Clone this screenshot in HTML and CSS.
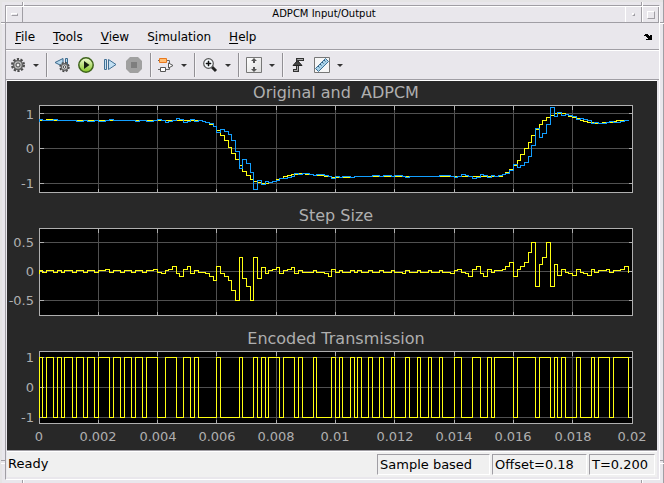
FILE: index.html
```html
<!DOCTYPE html>
<html lang="en">
<head>
<meta charset="utf-8">
<title>ADPCM Input/Output</title>
<link rel="stylesheet" href="styles.css">
</head>
<body>
<div class="frame">
  <i class="notch top left"></i><i class="notch top right"></i>
  <i class="notch bottom left"></i><i class="notch bottom right"></i>
  <i class="notch-side start"></i><i class="notch-side end"></i>
  <div class="window">
    <header class="titlebar">
      <button class="wm wm-menu" aria-label="Window menu"><i class="dash"></i></button>
      <h1>ADPCM Input/Output</h1>
      <button class="wm wm-min" aria-label="Minimize"><i class="dot"></i></button>
      <button class="wm wm-max" aria-label="Maximize"><i class="square"></i></button>
    </header>
    <nav class="menubar">
      <button><u>F</u>ile</button>
      <button><u>T</u>ools</button>
      <button><u>V</u>iew</button>
      <button>S<u>i</u>mulation</button>
      <button><u>H</u>elp</button>
      <button class="dock" aria-label="Dock window"><svg width="8" height="7" viewBox="0 0 8 7"><path d="M0 1h1V0h3v1h1v1h1V1h2v5H2V5h2V4H3V3H2V2H0z"/></svg></button>
    </nav>
    <div class="toolbar">
      <button class="tool" aria-label="Configuration"><svg width="16" height="16" viewBox="0 0 16 16"><circle cx="8" cy="8" r="5.8" fill="none" stroke="#4b4b4b" stroke-width="2.4" stroke-dasharray="2.2 1.44"/><circle cx="8" cy="8" r="4.5" fill="#bcbcbc" stroke="#626262" stroke-width="1.6"/><circle cx="8" cy="8" r="2" fill="#eee" stroke="#4a4a4a"/></svg></button>
      <button class="caret" aria-label="Configuration options"></button>
      <i class="sep"></i>
      <button class="tool" aria-label="Step back options"><svg width="16" height="16" viewBox="0 0 16 16"><path d="M9 1.500v8L1 5.500z" fill="#b6d7ec" stroke="#3b698d"/><path d="M11.500 1.500h2v8h-2z" fill="#b6d7ec" stroke="#3b698d"/><circle cx="10.500" cy="10" r="4.200" fill="none" stroke="#444" stroke-width="2" stroke-dasharray="1.900 1.400"/><circle cx="10.500" cy="10" r="3.200" fill="#ddd" stroke="#666" stroke-width="1.400"/><circle cx="10.500" cy="10" r="1.300" fill="#fff" stroke="#444"/></svg></button>
      <button class="tool" aria-label="Run"><svg width="16" height="16" viewBox="0 0 16 16"><defs><linearGradient id="run" x2="0" y2="1"><stop stop-color="#f2fbd8"/><stop offset="1" stop-color="#83c524"/></linearGradient></defs><circle cx="8" cy="8" r="7.200" fill="url(#run)" stroke="#3f641c" stroke-width="1.500"/><path d="M6 4v8l5.500-4z" fill="#151d10"/></svg></button>
      <button class="tool" aria-label="Step forward"><svg width="16" height="16" viewBox="0 0 16 16"><path d="M2.500 2.500h2v10h-2zM6.500 2.500v10L14 7.500z" fill="#c2dff2" stroke="#416f94"/></svg></button>
      <button class="tool" aria-label="Stop"><svg width="16" height="16" viewBox="0 0 16 16"><path d="M4 0h8l4 4v8l-4 4H4l-4-4V4z" fill="#a0a0a0"/><path d="M5 5h6v6H5z" fill="#7e7e7e"/></svg></button>
      <i class="sep"></i>
      <button class="tool" aria-label="Highlight block"><svg width="16" height="16" viewBox="0 0 16 16"><path d="M8 3.500h3.500v3M11.500 10v2.500H8M0 3.500h2M0 12.500h2" fill="none" stroke="#666"/><path d="M1.500 1.500h7v4h-7z" fill="#ffbd72" stroke="#e9781d"/><path d="M10.500 6l4.500 2.500-4.500 2.500z" fill="#fff" stroke="#555"/><path d="M2.500 10.500h5v4h-5z" fill="#fff" stroke="#555"/></svg></button>
      <button class="caret" aria-label="Highlight options"></button>
      <i class="sep"></i>
      <button class="tool" aria-label="Zoom in"><svg width="16" height="16" viewBox="0 0 16 16"><path d="M10 10l4 4" stroke="#222" stroke-width="3"/><circle cx="6.500" cy="6.500" r="4.800" fill="#f4f8fb" stroke="#555" stroke-width="1.200"/><path d="M6 4h1v2h2v1H7v2H6V7H4V6h2z" fill="#111" stroke="#111" stroke-width=".5"/></svg></button>
      <button class="caret" aria-label="Zoom options"></button>
      <i class="sep"></i>
      <button class="tool" aria-label="Scale axes"><svg width="16" height="16" viewBox="0 0 16 16"><defs><linearGradient id="page" x2="1" y2="1"><stop stop-color="#fff"/><stop offset="1" stop-color="#ddd"/></linearGradient></defs><path d="M.5.5h15v15H.5z" fill="url(#page)" stroke="#777"/><path d="M8 1l3 3H9v2H7V4H5zM8 15l3-3H9v-2H7v2H5z" fill="#555"/></svg></button>
      <button class="caret" aria-label="Scaling options"></button>
      <i class="sep"></i>
      <button class="tool" aria-label="Triggers"><svg width="16" height="16" viewBox="0 0 16 16"><path d="M3 13.500h4.500v-11H14" fill="none" stroke="#333" stroke-width="3"/><path d="M4 13.500h3.500v-11H13" fill="none" stroke="#aaa"/><path d="M7.500 3.500L12 8.500H3z" fill="#444" stroke="#222"/></svg></button>
      <button class="tool" aria-label="Measurements"><svg width="16" height="16" viewBox="0 0 16 16"><path d="M.5.5h15v15H.5z" fill="#f6f6f6" stroke="#777"/><path d="M1.500 11.500l10-10 3 3-10 10z" fill="#a9d2e9" stroke="#3e7094"/><path d="M4 9l1.500 1.500M6 7l1.500 1.500M8 5l1.500 1.500M10 3l1.500 1.500" stroke="#315c7c"/></svg></button>
      <button class="caret" aria-label="Measurement options"></button>
    </div>
    <main class="scope">
      <svg class="plots" viewBox="7 81 650 369" role="img" aria-label="Scope plots">
        <g class="lines" transform="translate(.5 .5)">
          <path class="area" d="M39 105h593v87H39zM39 228h593v87H39zM39 351h593v72H39z"/>
          <path class="grid" d="M39 113H632M39 148H632M39 183H632M39 242H632M39 271H632M39 300H632M39 357H632M39 387H632M39 417H632"/>
          <path class="grid" d="M98 105v87m0 36v87m0 36v72M157 105v87m0 36v87m0 36v72M216 105v87m0 36v87m0 36v72M276 105v87m0 36v87m0 36v72M335 105v87m0 36v87m0 36v72M394 105v87m0 36v87m0 36v72M454 105v87m0 36v87m0 36v72M513 105v87m0 36v87m0 36v72M572 105v87m0 36v87m0 36v72"/>
          <path class="axis" d="M39 105h593v87H39zM39 228h593v87H39zM39 351h593v72H39z"/>
          <path class="axis" d="M39 113h4m585 0h4M39 148h4m585 0h4M39 183h4m585 0h4M39 242h4m585 0h4M39 271h4m585 0h4M39 300h4m585 0h4M39 357h4m585 0h4M39 387h4m585 0h4M39 417h4m585 0h4"/>
          <path class="axis" d="M98 105v4m0 79v4m0 36v4m0 79v4m0 36v4m0 64v4M157 105v4m0 79v4m0 36v4m0 79v4m0 36v4m0 64v4M216 105v4m0 79v4m0 36v4m0 79v4m0 36v4m0 64v4M276 105v4m0 79v4m0 36v4m0 79v4m0 36v4m0 64v4M335 105v4m0 79v4m0 36v4m0 79v4m0 36v4m0 64v4M394 105v4m0 79v4m0 36v4m0 79v4m0 36v4m0 64v4M454 105v4m0 79v4m0 36v4m0 79v4m0 36v4m0 64v4M513 105v4m0 79v4m0 36v4m0 79v4m0 36v4m0 64v4M572 105v4m0 79v4m0 36v4m0 79v4m0 36v4m0 64v4"/>
          <path class="yellow" d="M39 120H46V119H53V120H202V121H205V122H209V124H213V126H216V130H220V135H224V140H228V147H231V153H235V159H239V165H242V171H246V175H250V179H253V181H257V182H261V183H268V182H272V181H276V179H279V178H283V176H287V175H291V174H298V173H305V174H313V175H324V176H331V177H354V176H502V174H505V172H509V169H513V165H517V160H520V154H524V148H528V142H531V135H535V129H539V124H542V120H546V117H550V115H554V113H565V114H568V116H572V117H576V118H580V120H583V121H587V122H594V123H602V122H613V121H616V120H628"/>
          <path class="blue" d="M39 121V119H42V120H46V120H53V119H57V120H76V121H83V120H87V121H94V120H98V121H105V120H109V119H113V120H135V121H139V120H146V121H153V120H157V119H161V120H165V122H168V121H172V120H176V118H179V119H183V122H187V121H190V119H194V121H198V120H202V121H205V122H209V123H213V126H216V132H220V129H224V131H228V134H231V140H235V151H239V168H242V159H246V163H250V172H253V189H257V180H261V184H265V181H268V182H272V181H276V180H279V178H287V177H291V176H294V173H298V174H302V173H309V174H313V175H316V174H324V175H328V176H331V178H335V176H339V177H342V176H350V177H354V176H372V175H379V176H383V175H391V176H394V175H402V176H405V177H409V176H439V175H450V176H454V177H457V176H461V174H465V175H468V176H472V178H476V177H480V174H483V175H487V177H491V175H494V176H498V175H502V174H505V173H509V170H513V164H517V167H520V165H524V162H528V156H531V145H535V128H539V137H542V133H546V124H550V107H554V116H557V112H561V115H565V114H568V115H572V116H576V119H580V118H583V119H587V120H591V123H594V122H598V123H606V122H609V121H613V122H620V121H624V120H628V119"/>
          <path class="yellow" d="M39 273V270H42V272H46V270H53V272H57V270H61V272H64V270H72V272H76V270H83V272H87V270H94V272H98V270H105V269H109V272H113V270H120V272H124V270H131V272H135V270H142V272H146V270H153V269H157V272H161V273H165V270H168V269H172V266H176V273H179V276H183V269H187V266H190V273H194V270H198V272H205V273H209V276H213V280H216V266H220V273H224V276H228V280H231V290H235V300H239V257H242V278H246V286H250V300H253V257H257V278H261V267H265V273H268V270H272V269H276V267H279V273H283V270H287V269H291V267H294V273H298V270H302V272H313V270H316V272H324V273H328V276H331V269H335V272H339V270H342V272H350V270H354V272H357V270H361V272H368V270H372V272H379V270H383V272H391V270H394V272H402V273H405V270H409V272H417V270H420V272H428V270H431V272H439V270H442V272H450V273H454V270H457V269H461V272H465V273H468V276H472V269H476V266H480V273H483V276H487V269H491V272H494V270H502V269H505V266H509V262H513V276H517V269H520V266H524V262H528V252H531V242H535V286H539V264H542V257H546V242H550V286H554V264H557V275H561V269H565V272H568V273H572V275H576V269H580V272H583V273H587V275H591V269H594V272H598V270H606V269H609V272H613V270H620V269H624V266H628V272"/>
          <path class="yellow" d="M39 417V357H42V417H46V357H53V417H57V357H61V417H64V357H72V417H76V357H83V417H87V357H94V417H98V357H109V417H113V357H120V417H124V357H131V417H135V357H142V417H146V357H157V417H165V357H176V417H183V357H190V417H194V357H198V417H216V357H220V417H239V357H242V417H253V357H257V417H261V357H265V417H268V357H279V417H283V357H294V417H298V357H302V417H313V357H316V417H331V357H335V417H339V357H342V417H350V357H354V417H357V357H361V417H368V357H372V417H379V357H383V417H391V357H394V417H405V357H409V417H417V357H420V417H428V357H431V417H439V357H442V417H454V357H461V417H472V357H480V417H487V357H491V417H494V357H513V417H517V357H535V417H539V357H550V417H554V357H557V417H561V357H565V417H576V357H580V417H591V357H594V417H598V357H609V417H613V357H628V417"/>
        </g>
        <g class="heading">
          <text x="336" y="98">Original and&nbsp; ADPCM</text>
          <text x="336" y="221">Step Size</text>
          <text x="336" y="344">Encoded Transmission</text>
        </g>
        <g class="ylabels">
          <text x="34" y="119">1</text><text x="34" y="153">0</text><text x="34" y="188">-1</text>
          <text x="34" y="247">0.5</text><text x="34" y="276">0</text><text x="34" y="305">-0.5</text>
          <text x="34" y="362">1</text><text x="34" y="392">0</text><text x="34" y="422">-1</text>
        </g>
        <g class="xlabels">
          <text x="39" y="441">0</text><text x="98" y="441">0.002</text><text x="158" y="441">0.004</text><text x="217" y="441">0.006</text><text x="276" y="441">0.008</text><text x="335" y="441">0.01</text><text x="395" y="441">0.012</text><text x="454" y="441">0.014</text><text x="513" y="441">0.016</text><text x="573" y="441">0.018</text><text x="632" y="441">0.02</text>
        </g>
      </svg>
    </main>
    <footer class="statusbar">
      <span class="message">Ready</span>
      <span class="cell mode">Sample based</span>
      <span class="cell offset">Offset=0.18</span>
      <span class="cell time">T=0.200</span>
    </footer>
  </div>
</div>
</body>
</html>
```
FILE: styles.css
```css
:root {
  --face: #e9e7ec;
  --shade: #a09ea4;
  --light: #ffffff;
}

* { box-sizing: border-box; }

body {
  margin: 0;
  background: var(--face);
  font: 12px/16px "DejaVu Sans", sans-serif;
  color: #000;
}

button {
  margin: 0;
  padding: 0;
  border: 0;
  background: none;
  color: inherit;
  font: inherit;
}

/* Window manager frame */
.frame {
  position: relative;
  display: flex;
  min-height: 100vh;
  padding: 5px 3px 3px 5px;
  border-right: 1px solid var(--shade);
  border-bottom: 1px solid var(--shade);
  box-shadow: inset 2px 2px #e5e4e5;
}

.window {
  flex: 1;
  display: flex;
  flex-direction: column;
  min-width: 0;
  border: 1px solid var(--shade);
  border-right-color: var(--light);
  border-bottom-color: var(--light);
}

.notch,
.notch-side {
  position: absolute;
}

.notch {
  width: 2px;
  height: 4px;
  border-left: 1px solid var(--shade);
  border-right: 1px solid var(--light);
}

.notch.top { top: 2px; }
.notch.bottom { bottom: -1px; }
.notch.left { left: 22px; }
.notch.right { right: 20px; }

.notch-side {
  width: 4px;
  height: 2px;
  border-top: 1px solid var(--shade);
  border-bottom: 1px solid var(--light);
}

.notch-side.start { left: 1px; top: 22px; }
.notch-side.end { right: -1px; top: 22px; }

.notch-side::after {
  content: "";
  display: block;
  height: 2px;
  margin-top: 437px;
  border-top: 1px solid var(--shade);
  border-bottom: 1px solid var(--light);
}

/* Title bar */
.titlebar {
  display: flex;
  height: 17px;
  border-top: 1px solid var(--light);
  border-bottom: 1px solid var(--shade);
}

.titlebar h1 {
  flex: 1;
  margin: 0;
  font-size: 10px;
  font-weight: normal;
  line-height: 14px;
  text-align: center;
}

.wm {
  display: flex;
  align-items: center;
  justify-content: center;
  width: 17px;
  border-left: 1px solid var(--light);
  border-right: 1px solid var(--shade);
}

.wm i {
  border: 1px solid var(--light);
  border-right-color: var(--shade);
  border-bottom-color: var(--shade);
}

.dash { width: 7px; height: 3px; }
.dot { width: 3px; height: 3px; }
.square { width: 8px; height: 8px; }

/* Menu bar */
.menubar {
  display: flex;
  height: 27px;
  padding: 2px 7px 0 0;
  border-bottom: 1px solid var(--shade);
}

.menubar button { padding: 0 9px; }
.menubar u { text-underline-offset: 2px; }

.menubar .dock {
  display: flex;
  align-items: center;
  margin-left: auto;
  padding: 0;
}

/* Tool bar */
.toolbar {
  display: flex;
  align-items: center;
  height: 30px;
  border-top: 1px solid var(--light);
  border-bottom: 1px solid var(--shade);
}

.tool {
  display: flex;
  justify-content: center;
  width: 24px;
}

.caret {
  display: flex;
  justify-content: center;
  width: 12px;
}

.caret::before {
  content: "";
  border: 3px solid transparent;
  border-top-color: #333;
  border-bottom: 0;
}

.sep {
  width: 2px;
  height: 24px;
  margin: 0 2px 0 4px;
  border-left: 1px solid #929095;
  border-right: 1px solid #f5f4f6;
}

/* Plots */
.scope {
  margin: 0 2px 0 1px;
  border-top: 1px solid var(--light);
  background: #282828;
}

.plots {
  display: block;
  width: 100%;
  font-size: 13px;
  fill: #afafaf;
}

.lines {
  fill: none;
  shape-rendering: crispEdges;
}

.area { fill: #000; }
.grid { stroke: #505050; }
.axis { stroke: #afafaf; }
.yellow { stroke: #ffff11; }
.blue { stroke: #139fff; }

.heading {
  font-size: 16px;
  text-anchor: middle;
}

.ylabels { text-anchor: end; }
.xlabels { text-anchor: middle; }

/* Status bar */
.statusbar {
  flex: 1;
  display: flex;
  align-items: flex-start;
  gap: 2px;
  margin: 0 2px 0 1px;
  padding: 2px 2px 2px 1px;
  border-top: 1px solid var(--shade);
  border-bottom: 2px solid var(--face);
  background: #f0f0f0;
  box-shadow: inset 0 1px var(--light);
  font-size: 13px;
  line-height: 19px;
}

.message { flex: 1; margin-top: 1px; }

.cell {
  margin-top: 1px;
  padding-left: 2px;
  border: 1px solid var(--shade);
  border-right-color: var(--light);
  border-bottom-color: var(--light);
  white-space: nowrap;
}

.mode { width: 113px; }
.offset { width: 95px; }
.time { width: 66px; }
```
